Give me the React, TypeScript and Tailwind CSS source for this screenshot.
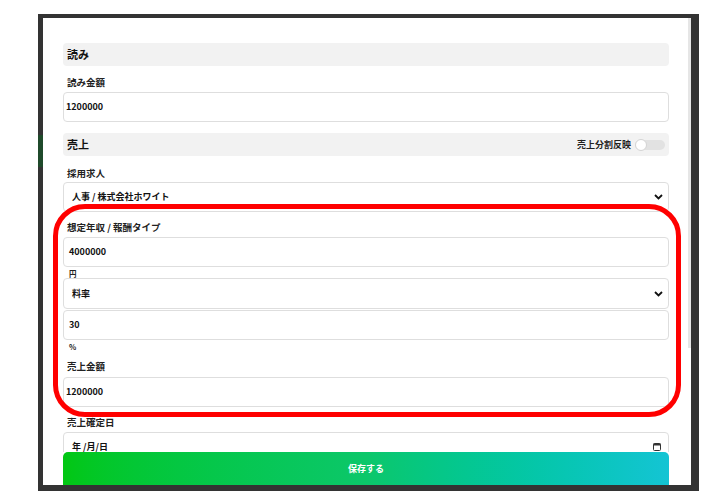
import React from "react";

const font = "font-['Noto_Sans_CJK_JP','Noto_Sans',sans-serif]";

function Label({ text, mt }: { text: string; mt: string }) {
  return (
    <div className={`${mt} h-[14px] leading-[14px] pl-[4px] text-[9.5px] font-bold text-[#222]`}>{text}</div>
  );
}

function Input({ value, mt, pl = "pl-[3px]" }: { value: string; mt: string; pl?: string }) {
  return (
    <div className={`${mt} h-[30px] rounded-[4px] border border-[#dedede] bg-white flex items-center ${pl} text-[9px] font-semibold text-[#111]`}>
      {value}
    </div>
  );
}

function Chevron() {
  return (
    <svg width="9" height="6" viewBox="0 0 9 6" className="shrink-0">
      <polyline points="1,1 4.5,4.5 8,1" fill="none" stroke="#111" strokeWidth="1.8" />
    </svg>
  );
}

function Select({ value, mt, h = "h-[30px]" }: { value: string; mt: string; h?: string }) {
  return (
    <div className={`${mt} ${h} rounded-[4px] border border-[#dedede] bg-white flex items-center justify-between pl-[8px] pr-[5px] text-[9px] font-semibold text-[#111]`}>
      <span>{value}</span>
      <Chevron />
    </div>
  );
}

function Header({ title, mt, children }: { title: string; mt: string; children?: React.ReactNode }) {
  return (
    <div className={`${mt} h-[23px] rounded-[4px] bg-[#f2f2f2] flex items-center justify-between pl-[4px] pr-[4px]`}>
      <span className="text-[11px] font-bold text-[#111]">{title}</span>
      {children}
    </div>
  );
}

export default function App() {
  return (
    <div className={`w-[712px] h-[504px] bg-white relative overflow-hidden ${font}`}>
      <div className="pl-[38px] pt-[14px]">
        <div className="w-[661px] h-[477px] bg-[#333] flex">
          <div className="w-[5px] flex flex-col pt-[121px]">
            <div className="h-[32px] bg-[#1f4a2b]" />
          </div>
          <div className="mt-[4px] w-[648px] h-[467px] bg-white flex">
            <div className="w-[645px] h-full flex flex-col">
              <div className="flex-1 overflow-hidden pl-[20px] pr-[19px] pt-[25px]">
                <Header title="読み" mt="mt-0" />
                <Label text="読み金額" mt="mt-[9px]" />
                <Input value="1200000" mt="mt-[3px]" pl="pl-[2px]" />
                <Header title="売上" mt="mt-[11px]">
                  <div className="flex items-center gap-[4px]">
                    <span className="text-[9px] font-bold text-[#222]">売上分割反映</span>
                    <div className="w-[30px] h-[10px] rounded-full bg-[#e2e2e2] relative">
                      <div className="absolute left-0 top-[-1px] w-[12px] h-[12px] rounded-full bg-white border border-[#d4d4d4]" />
                    </div>
                  </div>
                </Header>
                <Label text="採用求人" mt="mt-[10px]" />
                <Select value="人事 / 株式会社ホワイト" mt="mt-[2px]" />
                <Label text="想定年収 / 報酬タイプ" mt="mt-[8px]" />
                <Input value="4000000" mt="mt-[3px]" pl="pl-[5px]" />
                <div className="mt-[3px] h-[8px] leading-[8px] pl-[6px] text-[7.5px] font-bold text-[#222]">円</div>
                <Select value="料率" mt="mt-0" h="h-[31px]" />
                <Input value="30" mt="mt-[1px]" pl="pl-[5px]" />
                <div className="mt-[2px] h-[10px] leading-[10px] pl-[6px] text-[7.5px] font-bold text-[#222]">%</div>
                <Label text="売上金額" mt="mt-[7px]" />
                <Input value="1200000" mt="mt-[4px]" pl="pl-[2px]" />
                <Label text="売上確定日" mt="mt-[8px]" />
                <div className="mt-[3px] h-[30px] rounded-[4px] border border-[#dedede] bg-white flex items-center justify-between pl-[8px] pr-[7px] text-[9px] font-semibold text-[#111]">
                  <span>年 /月/日</span>
                  <svg width="8" height="8" viewBox="0 0 8 8">
                    <rect x="0.5" y="0.5" width="7" height="7" rx="1" fill="none" stroke="#333" strokeWidth="1" />
                    <rect x="0.5" y="0.5" width="7" height="2" fill="#333" />
                  </svg>
                </div>
              </div>
              <div className="h-[33px] shrink-0 pl-[20px] pr-[19px]">
                <div className="h-full rounded-t-[5px] bg-linear-to-r from-[#02c712] via-[#0cc76a] to-[#14c4d4] flex items-center justify-center text-[9px] font-bold text-white">
                  保存する
                </div>
              </div>
            </div>
            <div className="w-[3px] h-full flex flex-col">
              <div className="h-[330px] bg-[#e6e6e6]" />
            </div>
          </div>
        </div>
      </div>
      <div className="absolute left-[53px] top-[204px] w-[628px] h-[213px] rounded-[32px] border-[5px] border-[#ff0000] pointer-events-none" />
    </div>
  );
}
